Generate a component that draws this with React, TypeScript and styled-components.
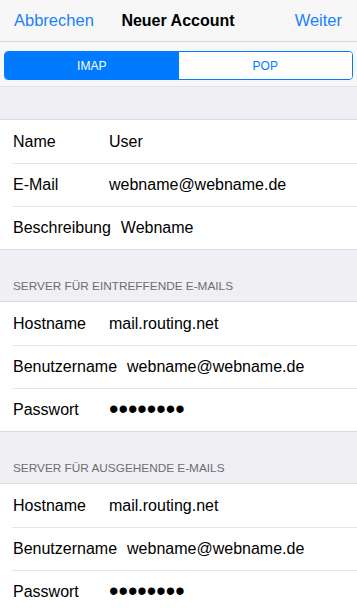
import React from 'react';
import styled, { createGlobalStyle } from 'styled-components';

const GlobalStyle = createGlobalStyle`
    html, body {
        margin: 0;
        padding: 0;
        background-color: #efeff4;
    }
    body {
        font-family: 'Liberation Sans', Arial, sans-serif;
        -webkit-font-smoothing: antialiased;
    }
`;

const Screen = styled.div`
    width: 357px;
    height: 609px;
    overflow: hidden;
    background-color: #efeff4;
`;

const NavBar = styled.div`
    height: 41px;
    display: grid;
    grid-template-columns: 1fr auto 1fr;
    align-items: center;
    padding: 0 15px 0 14px;
    background-color: #f7f7f7;
    border-bottom: 1px solid #d6d6d9;
`;

const NavLink = styled.span<{ $end?: boolean }>`
    color: #1a82fb;
    font-size: 16.5px;
    justify-self: ${props => (props.$end ? 'end' : 'start')};
`;

const NavTitle = styled.span`
    color: #000;
    font-size: 16px;
    font-weight: bold;
`;

const SegmentBar = styled.div`
    height: 45px;
    padding: 9px 4px 0 4px;
    box-sizing: border-box;
    background-color: #f7f7f7;
    border-bottom: 1px solid #e3e3e6;
`;

const Segmented = styled.div`
    display: grid;
    grid-template-columns: 1fr 1fr;
    height: 29px;
    box-sizing: border-box;
    border: 1px solid #007aff;
    border-radius: 4px;
    overflow: hidden;
`;

const Segment = styled.div<{ $active?: boolean }>`
    display: flex;
    align-items: center;
    justify-content: center;
    font-size: 12px;
    color: ${props => (props.$active ? '#ffffff' : '#007aff')};
    background-color: ${props => (props.$active ? '#007aff' : '#ffffff')};
`;

const Spacer = styled.div<{ $height: number }>`
    height: ${props => props.$height}px;
`;

const SectionHeader = styled.div`
    height: 51px;
    display: flex;
    align-items: flex-end;
    padding: 0 13px 8px 13px;
    box-sizing: border-box;
    font-size: 11.8px;
    color: #6d6d72;
`;

const Section = styled.div`
    background-color: #ffffff;
    border-top: 1px solid #dcdce0;
    border-bottom: 1px solid #dcdce0;
`;

const Row = styled.div`
    height: 43px;
    display: flex;
    align-items: center;
    margin-left: 12px;
    box-sizing: border-box;
    font-size: 16px;
    color: #000;

    & + & {
        border-top: 1px solid #e6e6ea;
    }
`;

const Label = styled.span`
    min-width: 86px;
    margin-left: 1px;
    margin-right: 10px;
    white-space: nowrap;
`;

const Value = styled.span`
    white-space: nowrap;
`;

const Secret = styled.span`
    font-size: 27px;
    line-height: 1;
    margin-top: -2px;
`;

type Field = { label: string; value: string; secret?: boolean };

const accountFields: Field[] = [
    { label: 'Name', value: 'User' },
    { label: 'E-Mail', value: 'webname@webname.de' },
    { label: 'Beschreibung', value: 'Webname' },
];

const serverFields: Field[] = [
    { label: 'Hostname', value: 'mail.routing.net' },
    { label: 'Benutzername', value: 'webname@webname.de' },
    { label: 'Passwort', value: '', secret: true },
];

const FieldRows: React.FC<{ fields: Field[] }> = ({ fields }) => (
    <Section>
        {fields.map(field => (
            <Row key={field.label}>
                <Label>{field.label}</Label>
                {field.secret ? (
                    <Secret>{'\u2022'.repeat(8)}</Secret>
                ) : (
                    <Value>{field.value}</Value>
                )}
            </Row>
        ))}
    </Section>
);

const App: React.FC = () => {
    return (
        <Screen>
            <GlobalStyle />
            <NavBar>
                <NavLink>Abbrechen</NavLink>
                <NavTitle>Neuer Account</NavTitle>
                <NavLink $end>Weiter</NavLink>
            </NavBar>
            <SegmentBar>
                <Segmented>
                    <Segment $active>IMAP</Segment>
                    <Segment>POP</Segment>
                </Segmented>
            </SegmentBar>
            <Spacer $height={32} />
            <FieldRows fields={accountFields} />
            <SectionHeader>SERVER FÜR EINTREFFENDE E-MAILS</SectionHeader>
            <FieldRows fields={serverFields} />
            <SectionHeader>SERVER FÜR AUSGEHENDE E-MAILS</SectionHeader>
            <FieldRows fields={serverFields} />
        </Screen>
    );
};

export default App;
